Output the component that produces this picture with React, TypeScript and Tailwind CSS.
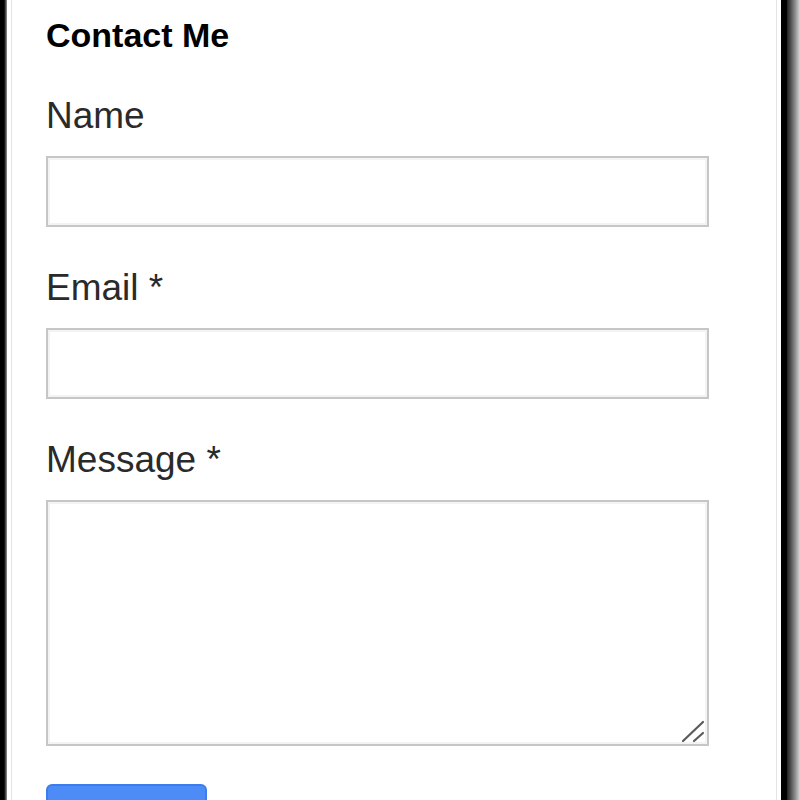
import React from "react";

export default function App() {
  return (
    <div className="flex h-[800px] w-[800px] overflow-hidden bg-white" style={{ fontFamily: '"Liberation Sans", Arial, sans-serif' }}>
      <div className="w-[7px] shrink-0 bg-gradient-to-r from-black via-black to-[#9a9a9a]" />
      <div className="w-[4px] shrink-0 bg-white" />
      <div className="flex w-[766px] shrink-0 flex-col border-x border-[#e4e4e4] bg-white pl-[34px]">
        <h2 className="mt-[15px] text-[34px] font-bold leading-[40px] text-black">Contact Me</h2>
        <form className="flex flex-col" onSubmit={(e) => e.preventDefault()}>
          <label className="mt-[40px] text-[37px] leading-[42px] text-[#2a2a2a]">Name</label>
          <input
            type="text"
            className="mt-[19px] h-[71px] w-[663px] border-2 border-[#c6c6c6] bg-white shadow-[inset_0_0_0_2px_#f3f3f3] outline-none"
          />
          <label className="mt-[40px] text-[37px] leading-[42px] text-[#2a2a2a]">Email *</label>
          <input
            type="email"
            className="mt-[19px] h-[71px] w-[663px] border-2 border-[#c6c6c6] bg-white shadow-[inset_0_0_0_2px_#f3f3f3] outline-none"
          />
          <label className="mt-[40px] text-[37px] leading-[42px] text-[#2a2a2a]">Message *</label>
          <div className="relative mt-[19px] h-[246px] w-[663px]">
            <textarea className="h-full w-full resize-none border-2 border-[#c6c6c6] bg-white shadow-[inset_0_0_0_2px_#f3f3f3] outline-none" />
            <svg className="pointer-events-none absolute left-[634px] top-[219px]" width="26" height="24" viewBox="0 0 26 24">
              <line x1="3" y1="22" x2="23" y2="3" stroke="#5a5a5a" strokeWidth="2.2" strokeLinecap="round" />
              <line x1="14" y1="22" x2="23" y2="14" stroke="#5a5a5a" strokeWidth="2.2" strokeLinecap="round" />
            </svg>
          </div>
          <button
            type="submit"
            aria-label="Send"
            className="mt-[38px] h-[62px] w-[161px] shrink-0 rounded-[6px] border-2 border-[#3b7ded] bg-[#4d8cf6]"
          />
        </form>
      </div>
      <div className="w-[4px] shrink-0 bg-white" />
      <div className="w-[6px] shrink-0 bg-black" />
      <div className="flex-1 bg-gradient-to-r from-[#222] to-[#d8d8d8]" />
    </div>
  );
}
